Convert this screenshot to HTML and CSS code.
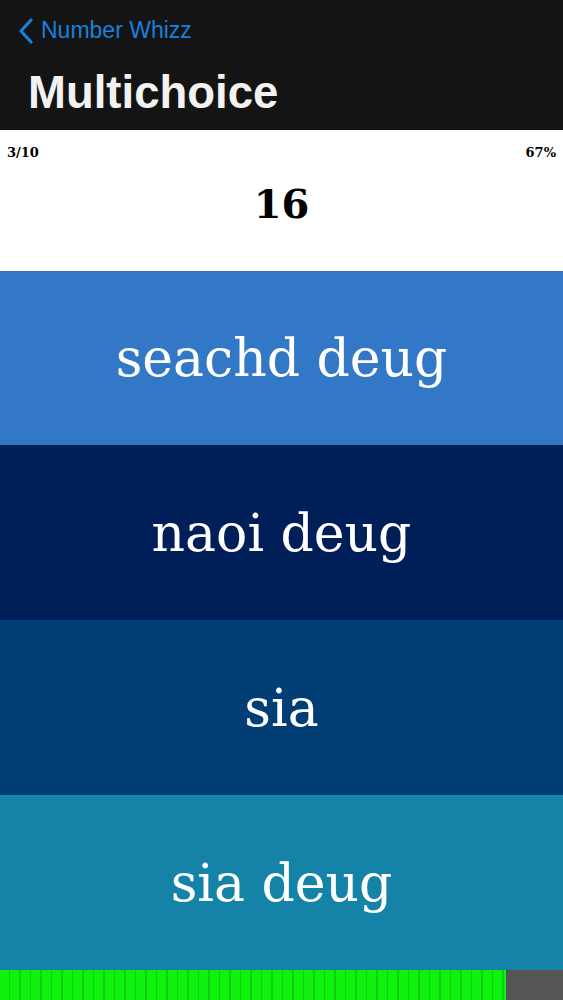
FILE: index.html
```html
<!DOCTYPE html>
<html lang="en">
<head>
  <meta charset="UTF-8">
  <meta name="viewport" content="width=device-width, initial-scale=1.0">
  <title>Multichoice</title>
  <link rel="stylesheet" href="styles.css">
</head>
<body>
  <div class="screen">
    <header class="nav">
      <a class="back" href="#">
        <svg class="chevron" viewBox="0 0 16 26" width="16" height="26">
          <path d="M13 2 L3 13 L13 24" fill="none" stroke="currentColor" stroke-width="3.2" stroke-linecap="round" stroke-linejoin="round"/>
        </svg>
        <span>Number Whizz</span>
      </a>
      <h1 class="title">Multichoice</h1>
    </header>

    <section class="question">
      <div class="stats">
        <span>3/10</span>
        <span>67%</span>
      </div>
      <div class="number">16</div>
    </section>

    <div class="answers">
      <button class="answer answer-1">seachd deug</button>
      <button class="answer answer-2">naoi deug</button>
      <button class="answer answer-3">sia</button>
      <button class="answer answer-4">sia deug</button>
    </div>

    <div class="progress">
      <div class="progress-fill" style="width: 506px;"></div>
    </div>
  </div>
</body>
</html>
```

FILE: styles.css
```css
:root {
  --nav-bg: #141414;
  --ios-blue: #1b7fdc;
  --answer-1: #3278c6;
  --answer-2: #001e58;
  --answer-3: #023e76;
  --answer-4: #1483a7;
  --bar-green: #0ef20e;
  --bar-track: #555555;
}

* {
  box-sizing: border-box;
  margin: 0;
  padding: 0;
}

body {
  font-family: "Liberation Sans", Arial, sans-serif;
  background-color: white;
}

.screen {
  width: 563px;
  height: 1000px;
  display: flex;
  flex-direction: column;
}

.nav {
  height: 130px;
  background-color: var(--nav-bg);
  padding: 17px 0 0 18px;
}

.back {
  display: flex;
  align-items: center;
  gap: 7px;
  color: var(--ios-blue);
  text-decoration: none;
  font-size: 23px;
  height: 27px;
}

.chevron {
  display: block;
}

.title {
  margin: 26px 0 0 10px;
  color: #f2f2f2;
  font-size: 45.5px;
  font-weight: 700;
  line-height: 1;
}

.question {
  height: 141px;
  padding: 15px 7px 0;
  font-family: "DejaVu Serif", serif;
  font-weight: 700;
  color: #000;
}

.stats {
  display: flex;
  justify-content: space-between;
  font-size: 13px;
}

.number {
  margin-top: 24px;
  text-align: center;
  font-size: 40px;
  line-height: 1;
}

.answers {
  display: flex;
  flex-direction: column;
}

.answer {
  height: 175px;
  border: none;
  color: white;
  font-family: "DejaVu Serif", serif;
  font-size: 52px;
  cursor: pointer;
}

.answer-1 { height: 174px; background-color: var(--answer-1); }
.answer-2 { background-color: var(--answer-2); }
.answer-3 { background-color: var(--answer-3); }
.answer-4 { background-color: var(--answer-4); }

.progress {
  height: 30px;
  background-color: var(--bar-track);
}

.progress-fill {
  height: 100%;
  background: repeating-linear-gradient(90deg, var(--bar-green) 0 9px, #10cf10 9px 10.5px);
}
```
